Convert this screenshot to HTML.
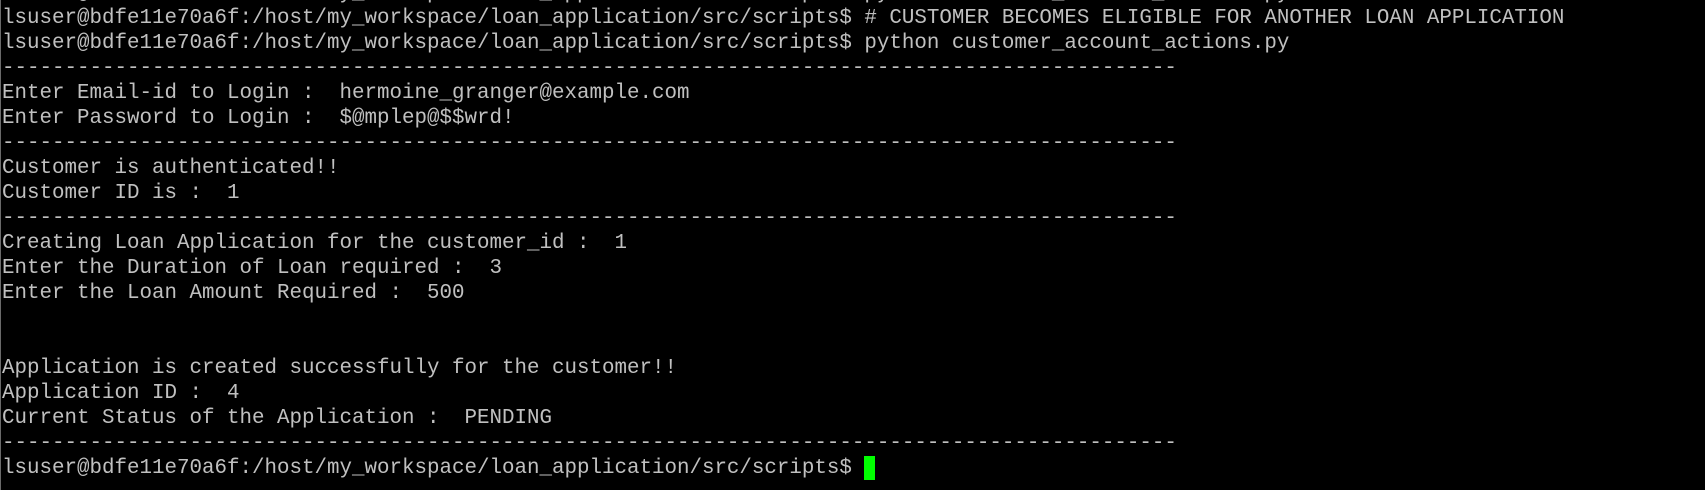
<!DOCTYPE html>
<html><head><meta charset="utf-8"><style>
html,body{margin:0;padding:0;background:#000;width:1705px;height:490px;overflow:hidden}
.t{position:absolute;left:2px;top:-19px;font-family:"Liberation Mono","Courier New",monospace;font-size:20.83px;line-height:25px;color:#c0c0c0;white-space:pre}
.b{position:absolute;left:0;top:0;width:1px;height:490px;background:#6a6a6a}
.c{display:inline-block;width:11px;height:24px;background:#00ff00;vertical-align:top;margin-top:0px}
</style></head><body><div class="b"></div><div class="t">lsuser@bdfe11e70a6f:/host/my_workspace/loan_application/src/scripts$ python customer_account_actions.py
lsuser@bdfe11e70a6f:/host/my_workspace/loan_application/src/scripts$ # CUSTOMER BECOMES ELIGIBLE FOR ANOTHER LOAN APPLICATION
lsuser@bdfe11e70a6f:/host/my_workspace/loan_application/src/scripts$ python customer_account_actions.py
----------------------------------------------------------------------------------------------
Enter Email-id to Login :  hermoine_granger@example.com
Enter Password to Login :  $@mplep@$$wrd!
----------------------------------------------------------------------------------------------
Customer is authenticated!!
Customer ID is :  1
----------------------------------------------------------------------------------------------
Creating Loan Application for the customer_id :  1
Enter the Duration of Loan required :  3
Enter the Loan Amount Required :  500


Application is created successfully for the customer!!
Application ID :  4
Current Status of the Application :  PENDING
----------------------------------------------------------------------------------------------
lsuser@bdfe11e70a6f:/host/my_workspace/loan_application/src/scripts$ <span class="c"></span></div></body></html>
